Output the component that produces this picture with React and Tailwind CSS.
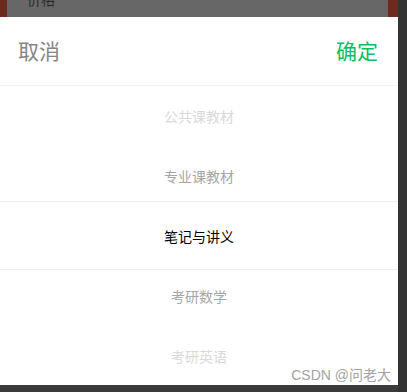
import React from "react";

const items = [
  { label: "公共课教材", color: "text-[#d9d9d9]" },
  { label: "专业课教材", color: "text-[#a6a6a6]" },
  { label: "笔记与讲义", color: "text-black" },
  { label: "考研数学", color: "text-[#a6a6a6]" },
  { label: "考研英语", color: "text-[#d9d9d9]" },
];

function Picker() {
  return (
    <div className="relative flex-1 overflow-hidden bg-white">
      {items.map((item, index) => (
        <div
          key={index}
          className={"flex h-[60px] items-center justify-center text-[14px] " + item.color}
        >
          {item.label}
        </div>
      ))}
      {/* selection indicator lines */}
      <div className="absolute left-0 right-0 top-[115px] h-[69px] border-y border-[#efefef]" />
    </div>
  );
}

export default function App() {
  return (
    <div
      className="relative flex h-[392px] w-[407px] bg-[#333333]"
      style={{ fontFamily: '"Noto Sans CJK SC", "Liberation Sans", sans-serif' }}
    >
      <div className="flex w-[398px] flex-col">
        <div className="flex h-[17px] overflow-hidden">
          <div className="w-[7px] bg-[#6b2b20]" />
          <div className="flex-1 bg-[#676767] pl-[20px]">
            <div className="mt-[-8px] text-[14px] leading-[14px] text-[#2a2a2a]">价格</div>
          </div>
          <div className="w-[10px] bg-[#6b2b20]" />
        </div>
        <div className="flex h-[368px] flex-col bg-white">
          <div className="flex h-[69px] items-center justify-between border-b border-[#f2f2f2] pl-[18px] pr-[20px] text-[21px]">
            <span className="text-[#858585]">取消</span>
            <span className="text-[#07c160]">确定</span>
          </div>
          <Picker />
        </div>
        <div className="h-[7px] bg-[#3b3b3b]" />
      </div>
      <div
        className="absolute right-[16px] top-[366px] text-[14px] leading-[18px] text-[#a3a3a3]"
        style={{ fontFamily: '"Liberation Sans", "Noto Sans CJK SC", sans-serif' }}
      >
        CSDN @问老大
      </div>
    </div>
  );
}
